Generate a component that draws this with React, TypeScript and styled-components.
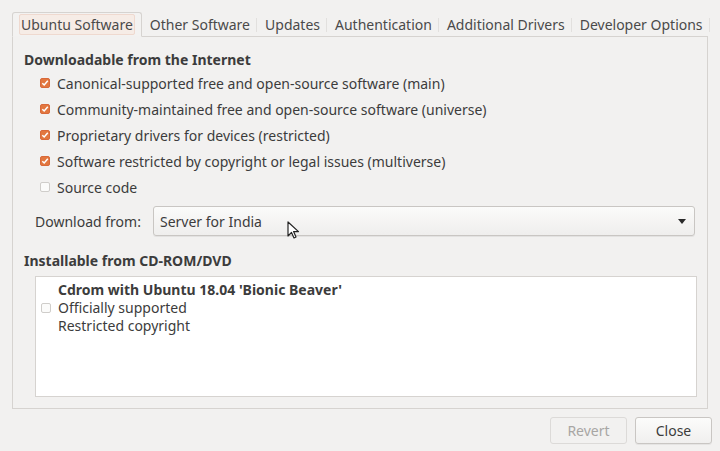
import React from "react";
import styled, { createGlobalStyle } from "styled-components";

const Global = createGlobalStyle`
  html, body { margin: 0; padding: 0; background: #f2f1f0; }
  body { font-family: "Noto Sans", "Open Sans", sans-serif; font-size: 14px; color: #3c3c3c; }
  * { box-sizing: border-box; }
`;

const Window = styled.div`
  width: 720px;
  height: 451px;
  background: #f2f1f0;
  padding: 12px 0 0 12px;
  display: flex;
  flex-direction: column;
  position: relative;
  overflow: hidden;
`;

const TabBar = styled.div`
  display: flex;
  height: 25px;
  align-items: stretch;
  margin-bottom: -1px;
  position: relative;
  z-index: 1;
`;

const Tab = styled.div<{ $active?: boolean }>`
  display: flex;
  align-items: center;
  padding: 0 6px;
  color: #4a4a4a;
  position: relative;
  white-space: nowrap;
  border: 1px solid ${(p) => (p.$active ? "#d6d3d0" : "transparent")};
  border-bottom: 1px solid ${(p) => (p.$active ? "#f2f1f0" : "transparent")};
  border-radius: 3px 3px 0 0;
  background: ${(p) => (p.$active ? "#f3f2f1" : "transparent")};
  & + & {
    margin-left: 1px;
  }
  &::after {
    content: "";
    position: absolute;
    right: -1px;
    top: 5px;
    bottom: 4px;
    width: 1px;
    background: ${(p) => (p.$active ? "transparent" : "#e2e0de")};
  }
`;

const FocusLabel = styled.span`
  padding: 0 1px;
  border: 1px solid #efd9cf;
  background: #f6ece6;
  border-radius: 2px;
`;

const Panel = styled.div`
  width: 696px;
  height: 373px;
  border: 1px solid #d6d3d0;
  background: #f2f1f0;
  padding: 13px 10px 0 11px;
  display: flex;
  flex-direction: column;
`;

const Heading = styled.div`
  font-weight: 700;
  line-height: 20px;
  color: #3c3c3c;
`;

const CheckRow = styled.div`
  display: flex;
  align-items: center;
  height: 26px;
  padding-left: 16px;
  gap: 7px;
`;

const Box = styled.span<{ $checked?: boolean }>`
  width: 10px;
  height: 10px;
  flex: none;
  border-radius: 2px;
  border: 1px solid ${(p) => (p.$checked ? "#d9693a" : "#cfcdca")};
  background: ${(p) => (p.$checked ? "#e2773f" : "#fbfbfa")};
  display: flex;
  align-items: center;
  justify-content: center;
`;

const DownloadRow = styled.div`
  display: flex;
  align-items: center;
  margin-top: 6px;
  height: 30px;
  padding-left: 11px;
`;

const Label = styled.span`
  width: 118px;
  flex: none;
`;

const Combo = styled.div`
  flex: 1;
  margin-right: 2px;
  height: 30px;
  border: 1px solid #c9c6c3;
  border-radius: 3px;
  background: linear-gradient(#fbfbfa, #efeeed);
  box-shadow: 0 1px 0 rgba(0, 0, 0, 0.06);
  display: flex;
  align-items: center;
  padding: 0 8px 0 6px;
  justify-content: space-between;
`;

const Section2 = styled(Heading)`
  margin-top: 15px;
`;

const ListBox = styled.div`
  margin: 5px 0 0 11px;
  height: 121px;
  background: #ffffff;
  border: 1px solid #d6d3d0;
  padding: 4px 0 0 5px;
  display: flex;
  align-self: stretch;
  align-items: flex-start;
`;

const ItemBoxWrap = styled.div`
  height: 54px;
  display: flex;
  align-items: center;
  margin-right: 7px;
`;

const ItemLines = styled.div`
  display: flex;
  flex-direction: column;
  line-height: 18px;
`;

const Bold = styled.span`
  font-weight: 700;
`;

const ButtonRow = styled.div`
  display: flex;
  justify-content: flex-end;
  gap: 8px;
  padding-right: 8px;
  margin-top: 8px;
`;

const Button = styled.button<{ $disabled?: boolean }>`
  width: 77px;
  height: 27px;
  font-family: inherit;
  font-size: 14px;
  border-radius: 3px;
  border: 1px solid ${(p) => (p.$disabled ? "#dcdad8" : "#c9c6c3")};
  background: ${(p) => (p.$disabled ? "#f2f1f0" : "linear-gradient(#fcfcfb, #f0efee)")};
  color: ${(p) => (p.$disabled ? "#a8a6a4" : "#3c3c3c")};
  box-shadow: ${(p) => (p.$disabled ? "none" : "0 1px 0 rgba(0,0,0,0.05)")};
  padding: 0;
`;

const Cursor = styled.svg`
  position: absolute;
  left: 287px;
  top: 221px;
`;

const Check = () => (
  <svg width="8" height="8" viewBox="0 0 8 8">
    <path d="M1.3 4.2 L3.2 6 L6.8 1.8" fill="none" stroke="#fff" strokeWidth="1.5" />
  </svg>
);

const sources = [
  { t: "Canonical-supported free and open-source software (main)", c: true },
  { t: "Community-maintained free and open-source software (universe)", c: true },
  { t: "Proprietary drivers for devices (restricted)", c: true },
  { t: "Software restricted by copyright or legal issues (multiverse)", c: true },
  { t: "Source code", c: false },
];

const tabs = [
  "Ubuntu Software",
  "Other Software",
  "Updates",
  "Authentication",
  "Additional Drivers",
  "Developer Options",
];

export default function App() {
  return (
    <Window>
      <Global />
      <TabBar>
        {tabs.map((t, i) => (
          <Tab key={t} $active={i === 0}>
            {i === 0 ? <FocusLabel>{t}</FocusLabel> : t}
          </Tab>
        ))}
      </TabBar>
      <Panel>
        <Heading>Downloadable from the Internet</Heading>
        {sources.map((s) => (
          <CheckRow key={s.t}>
            <Box $checked={s.c}>{s.c && <Check />}</Box>
            <span>{s.t}</span>
          </CheckRow>
        ))}
        <DownloadRow>
          <Label>Download from:</Label>
          <Combo>
            <span>Server for India</span>
            <svg width="8" height="5" viewBox="0 0 8 5">
              <path d="M0 0 H8 L4 5 Z" fill="#2a2a2a" />
            </svg>
          </Combo>
        </DownloadRow>
        <Section2>Installable from CD-ROM/DVD</Section2>
        <ListBox>
          <ItemBoxWrap>
            <Box />
          </ItemBoxWrap>
          <ItemLines>
            <Bold>Cdrom with Ubuntu 18.04 'Bionic Beaver'</Bold>
            <span>Officially supported</span>
            <span>Restricted copyright</span>
          </ItemLines>
        </ListBox>
      </Panel>
      <ButtonRow>
        <Button $disabled>Revert</Button>
        <Button>Close</Button>
      </ButtonRow>
      <Cursor width="14" height="20" viewBox="0 0 14 20">
        <path d="M1 1 L1 15 L4.5 11.5 L7 17 L9 16 L6.6 10.6 L11.5 10.6 Z" fill="#fff" stroke="#222" strokeWidth="1.2" strokeLinejoin="round" />
      </Cursor>
    </Window>
  );
}
